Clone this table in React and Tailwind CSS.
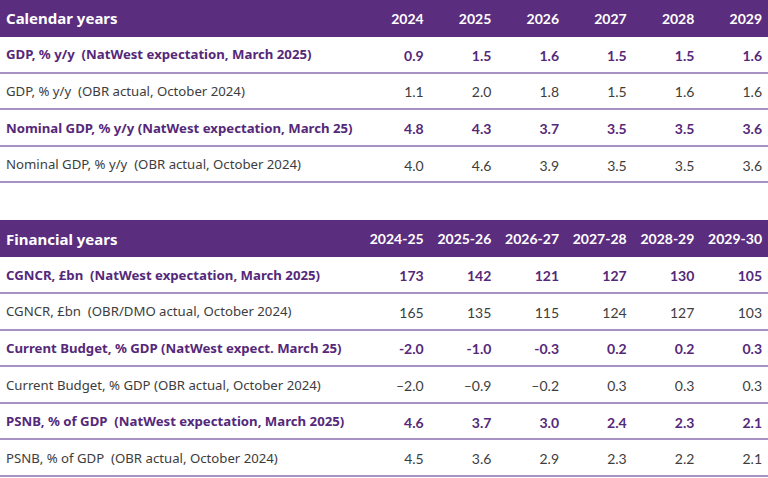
const calendar = {
  title: "Calendar years",
  cols: ["2024", "2025", "2026", "2027", "2028", "2029"],
  rows: [
    { label: "GDP, % y/y  (NatWest expectation, March 2025)", bold: true, values: ["0.9", "1.5", "1.6", "1.5", "1.5", "1.6"] },
    { label: "GDP, % y/y  (OBR actual, October 2024)", values: ["1.1", "2.0", "1.8", "1.5", "1.6", "1.6"] },
    { label: "Nominal GDP, % y/y (NatWest expectation, March 25)", bold: true, values: ["4.8", "4.3", "3.7", "3.5", "3.5", "3.6"] },
    { label: "Nominal GDP, % y/y  (OBR actual, October 2024)", values: ["4.0", "4.6", "3.9", "3.5", "3.5", "3.6"] },
  ],
};

const financial = {
  title: "Financial years",
  cols: ["2024-25", "2025-26", "2026-27", "2027-28", "2028-29", "2029-30"],
  rows: [
    { label: "CGNCR, £bn  (NatWest expectation, March 2025)", bold: true, values: ["173", "142", "121", "127", "130", "105"] },
    { label: "CGNCR, £bn  (OBR/DMO actual, October 2024)", values: ["165", "135", "115", "124", "127", "103"] },
    { label: "Current Budget, % GDP (NatWest expect. March 25)", bold: true, values: ["-2.0", "-1.0", "-0.3", "0.2", "0.2", "0.3"] },
    { label: "Current Budget, % GDP (OBR actual, October 2024)", values: ["\u20132.0", "\u20130.9", "\u20130.2", "0.3", "0.3", "0.3"] },
    { label: "PSNB, % of GDP  (NatWest expectation, March 2025)", bold: true, values: ["4.6", "3.7", "3.0", "2.4", "2.3", "2.1"] },
    { label: "PSNB, % of GDP  (OBR actual, October 2024)", values: ["4.5", "3.6", "2.9", "2.3", "2.2", "2.1"] },
  ],
};

const labelFont = "font-['Noto_Sans',sans-serif]";
const numFont = "font-['Lato',sans-serif]";

function Table({ data }) {
  return (
    <div>
      {/* Header bar */}
      <div className="flex h-[37px] items-center bg-[#5b2d7f] text-white">
        <div className={`w-[362px] pl-[6px] text-[15px] font-bold ${labelFont}`}>{data.title}</div>
        {data.cols.map((c) => (
          <div key={c} className={`flex-1 pr-[6px] text-right text-[14px] font-bold ${numFont}`}>
            {c}
          </div>
        ))}
      </div>

      {/* Rows */}
      {data.rows.map((r) => (
        <div
          key={r.label}
          className={`flex h-[36.6px] items-center border-b-2 pt-[2px] border-[#a892c2] ${
            r.bold ? "text-[#55287a] font-bold" : "text-[#3d3d3d]"
          }`}
        >
          <div className={`w-[362px] whitespace-pre pl-[6px] text-[13.2px] ${labelFont}`}>{r.label}</div>
          {r.values.map((v, i) => (
            <div key={i} className={`flex-1 pr-[6px] text-right text-[14px] ${numFont}`}>
              {v}
            </div>
          ))}
        </div>
      ))}
    </div>
  );
}

export default function App() {
  return (
    <div className="flex h-[478px] w-[768px] flex-col gap-[37px] overflow-hidden bg-white">
      <Table data={calendar} />
      <Table data={financial} />
    </div>
  );
}
